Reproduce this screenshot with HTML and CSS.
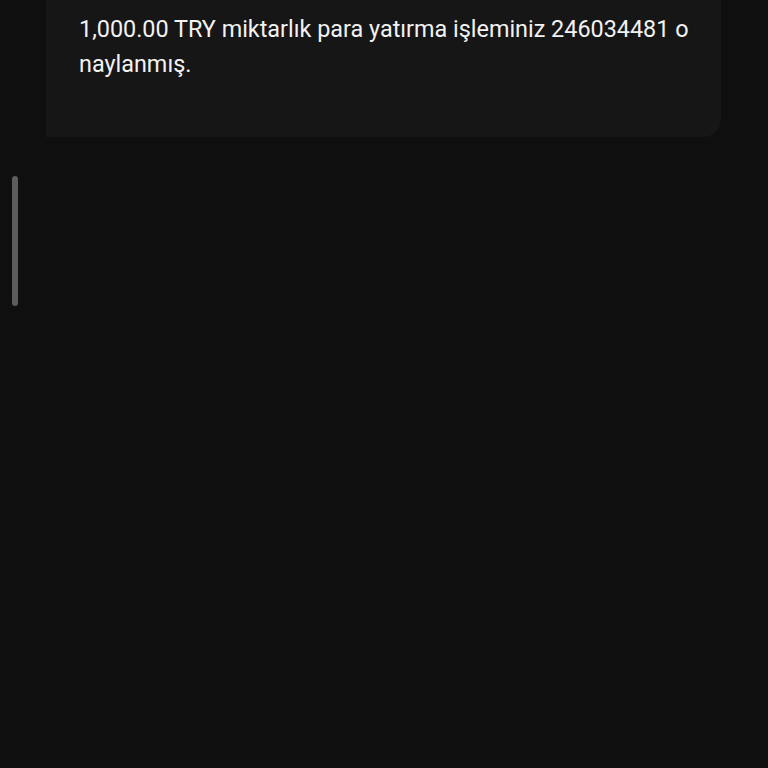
FILE: index.html
```html
<!DOCTYPE html>
<html lang="tr">
<head>
<meta charset="utf-8">
<link rel="stylesheet" href="styles.css">
</head>
<body>
<div class="screen">
  <div class="card">
    <p class="msg">1,000.00 TRY miktarlık para yatırma işleminiz 246034481 o<br>naylanmış.</p>
  </div>
  <div class="scrollbar"></div>
</div>
</body>
</html>
```
FILE: styles.css
```css
html, body {
  margin: 0;
  padding: 0;
  background: #0f0f0f;
}
.screen {
  position: relative;
  width: 768px;
  height: 768px;
  overflow: hidden;
  background: #0f0f0f;
  font-family: Roboto, "Noto Sans", sans-serif;
}
.card {
  margin-left: 46px;
  width: 675px;
  height: 137px;
  background: #161616;
  border-radius: 0 0 18px 0;
  box-sizing: border-box;
  padding: 12px 0 0 33px;
}
.msg {
  margin: 0;
  color: #f2f2f2;
  font-size: 23.4px;
  line-height: 35px;
  letter-spacing: 0;
}
.scrollbar {
  position: absolute;
  left: 12px;
  top: 176px;
  width: 6px;
  height: 130px;
  border-radius: 3px;
  background: #5c5c5c;
}
```
